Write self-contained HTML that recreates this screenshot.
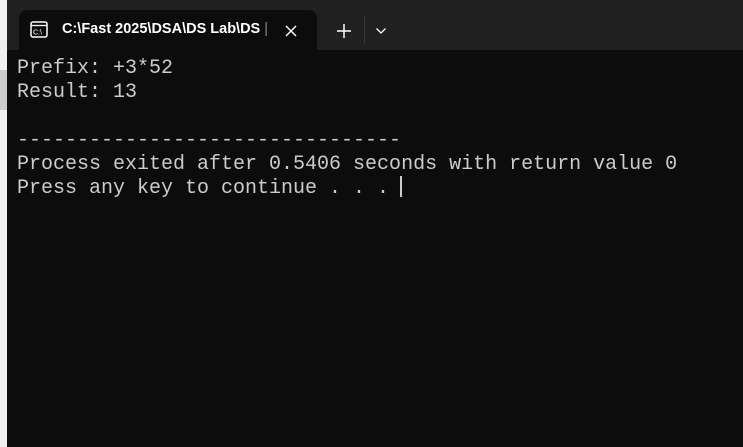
<!DOCTYPE html>
<html><head><style>
body{margin:0;width:743px;height:447px;overflow:hidden;background:#0c0c0c;position:relative;font-family:"Liberation Sans",sans-serif}
.left{position:absolute;left:0;top:0;width:7px;height:447px;background:#f0f0f0}
.leftg{position:absolute;left:0;top:70px;width:7px;height:40px;background:#ccc}
.title{position:absolute;left:7px;top:0;width:736px;height:50px;background:#202020}
.tab{position:absolute;left:19px;top:10px;width:298px;height:40px;background:#0c0c0c;border-radius:8px 8px 0 0}
.tt{position:absolute;left:62px;top:21px;color:#fff;font-size:14.5px;font-weight:bold;white-space:nowrap}
.term{position:absolute;left:17px;top:57px;color:#cccccc;font-family:"Liberation Mono",monospace;font-size:20px;line-height:24px;white-space:pre}
.cur{position:absolute;left:400px;top:176px;width:2px;height:21px;background:#ccc}
</style></head><body>
<div class="left"></div><div class="leftg"></div>
<div class="title"></div>
<div class="tab"></div>
<svg style="position:absolute;left:30px;top:21px" width="18" height="17" viewBox="0 0 18 17"><rect x="1" y="1" width="16" height="15" rx="2" fill="none" stroke="#fff" stroke-width="1.5"/><line x1="1" y1="4.5" x2="17" y2="4.5" stroke="#fff" stroke-width="1.3"/><text x="3" y="13.5" font-size="7" fill="#fff" font-family="Liberation Sans">C:\</text></svg>
<div class="tt">C:\Fast 2025\DSA\DS Lab\DS <span style="font-weight:normal;color:#888">|</span></div>
<svg style="position:absolute;left:284px;top:24px" width="14" height="14"><path d="M2 2L12 12M12 2L2 12" stroke="#fff" stroke-width="1.4"/></svg>
<svg style="position:absolute;left:336px;top:23px" width="16" height="16"><path d="M8 1V15M1 8H15" stroke="#fff" stroke-width="1.5"/></svg>
<div style="position:absolute;left:364px;top:16px;width:1px;height:28px;background:#3a3a3a"></div>
<svg style="position:absolute;left:375px;top:27px" width="12" height="8"><path d="M1.5 1.5L6 6L10.5 1.5" stroke="#fff" stroke-width="1.3" fill="none"/></svg>
<div class="term">Prefix: +3*52
Result: 13

--------------------------------
Process exited after 0.5406 seconds with return value 0
Press any key to continue . . . </div>
<div class="cur"></div>
</body></html>
